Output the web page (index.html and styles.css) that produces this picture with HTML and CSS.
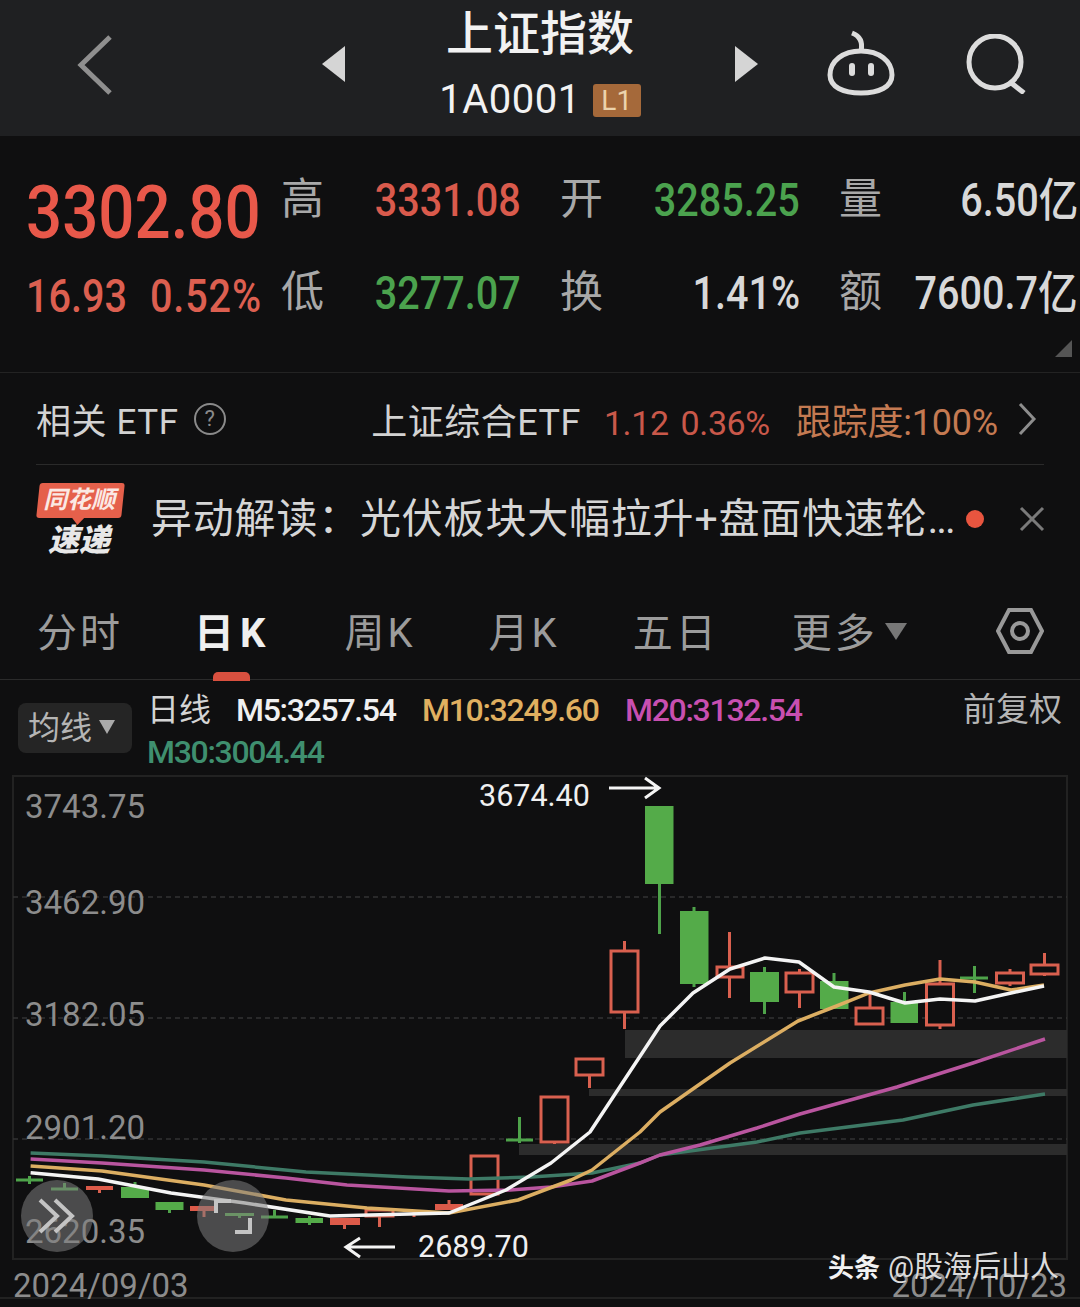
FILE: index.html
```html
<!DOCTYPE html>
<html lang="zh-CN">
  <head>
    <meta charset="UTF-8" />
    <meta name="viewport" content="width=device-width, initial-scale=1.0" />
    <title>上证指数</title>
    <link rel="stylesheet" href="styles.css">
  </head>
  <body>
    <header class="top-bar">
      <svg class="back-icon" viewBox="0 0 38 62"><path d="M34 3 L5 31 L34 59" /></svg>
      <span class="arrow-left"></span>
      <div class="title-box">
        <h1>上证指数</h1>
        <div class="code-line"><span class="code">1A0001</span><span class="level">L1</span></div>
      </div>
      <span class="arrow-right"></span>
      <svg class="robot-icon" viewBox="0 0 68 66">
        <path d="M34 21 C36 12 33 6 25 3" />
        <path d="M34 21 C52 21 65 31 65 45 C65 57 52 63 34 63 C16 63 3 57 3 45 C3 31 16 21 34 21 Z" />
        <rect class="eye" x="22" y="33" width="6" height="13" rx="3" />
        <rect class="eye" x="41" y="33" width="6" height="13" rx="3" />
      </svg>
      <svg class="search-icon" viewBox="0 0 60 60">
        <circle cx="29" cy="28" r="26" />
        <path d="M44 48 L58 59" />
      </svg>
    </header>

    <section class="quote">
      <div class="price-box">
        <div class="price num">3302.80</div>
        <div class="change">
          <span class="num">16.93</span>
          <span class="num">0.52%</span>
        </div>
      </div>
      <div class="stats">
        <div class="stat"><span class="stat-label">高</span><span class="num red">3331.08</span></div>
        <div class="stat"><span class="stat-label">开</span><span class="num green">3285.25</span></div>
        <div class="stat"><span class="stat-label">量</span><span class="num light">6.50亿</span></div>
        <div class="stat"><span class="stat-label">低</span><span class="num green">3277.07</span></div>
        <div class="stat"><span class="stat-label">换</span><span class="num light">1.41%</span></div>
        <div class="stat"><span class="stat-label">额</span><span class="num light">7600.7亿</span></div>
      </div>
      <span class="corner"></span>
    </section>

    <section class="etf-row">
      <div class="etf-left">
        <span class="etf-title">相关 ETF</span>
        <span class="help">?</span>
      </div>
      <div class="etf-right">
        <span class="etf-name">上证综合ETF</span>
        <span class="etf-num">1.12</span>
        <span class="etf-num">0.36%</span>
        <span class="etf-track">跟踪度:100%</span>
        <svg class="etf-more" viewBox="0 0 20 34"><path d="M3 2 L17 17 L3 32" /></svg>
      </div>
    </section>

    <section class="news-row">
      <div class="logo">
        <div class="logo-tag"><span>同花顺</span></div>
        <div class="logo-sub">速递</div>
      </div>
      <div class="news-text">异动解读：光伏板块大幅拉升+盘面快速轮<span class="dots">...</span></div>
      <span class="news-dot"></span>
      <svg class="news-close" viewBox="0 0 26 26"><path d="M2 2 L24 24 M24 2 L2 24" /></svg>
    </section>

    <nav class="tabs">
      <span class="tab">分时</span>
      <span class="tab active">日K</span>
      <span class="tab">周K</span>
      <span class="tab">月K</span>
      <span class="tab">五日</span>
      <span class="tab">更多<i class="tab-caret"></i></span>
      <svg class="hex-icon" viewBox="0 0 48 46">
        <path d="M13 2 L35 2 L46 23 L35 44 L13 44 L2 23 Z" />
        <circle cx="24" cy="23" r="8" />
      </svg>
    </nav>

    <section class="ma-row">
      <div class="ma-btn">均线<i class="ma-caret"></i></div>
      <div class="ma-values">
        <span class="ma-name">日线</span>
        <span class="ma-white">M5:3257.54</span>
        <span class="ma-orange">M10:3249.60</span>
        <span class="ma-pink">M20:3132.54</span>
        <span class="ma-green">M30:3004.44</span>
      </div>
      <div class="ma-adjust">前复权</div>
    </section>

    <section class="chart">
      <svg class="chart-svg" viewBox="0 775 1080 532">
        <path class="frame" d="M13 776 H1067 V1259 H13 Z M0 1298 H1080" />
        <path class="dash" d="M13 897 H1067 M13 1018 H1067 M13 1139 H1067" />
        <rect class="band" x="625" y="1030" width="442" height="28" />
        <rect class="band" x="589" y="1089" width="478" height="7" />
        <rect class="band" x="519" y="1144" width="548" height="11" />

        <g class="candle-up">
          <path d="M624.5 941 V1029 M729.5 932 V998 M799.5 969 V1008 M870 992 V1024 M940 960 V1029 M1010 969 V986 M1044.5 953 V976 M589.5 1058 V1088 M554.5 1096 V1144 M484.5 1155 V1195 M449 1200 V1210 M414 1212 V1217 M379.5 1209 V1227 M344.5 1218 V1229 M204 1206 V1217 M99.5 1186 V1193" />
          <rect x="611" y="951" width="27" height="61" />
          <rect x="717" y="967" width="26" height="10" />
          <rect x="786" y="973" width="27" height="19" />
          <rect x="856" y="1008" width="27" height="16" />
          <rect x="926.5" y="984" width="27" height="41" />
          <rect x="996.5" y="973" width="27" height="10" />
          <rect x="1031" y="965" width="27" height="9" />
          <rect x="576" y="1059" width="27" height="16" />
          <rect x="541" y="1097" width="27" height="45" />
          <rect x="471" y="1156" width="27" height="38" />
          <rect x="366" y="1210" width="27" height="6" />
        </g>
        <g class="candle-up-solid">
          <rect x="435" y="1204" width="28" height="6" />
          <rect x="330" y="1218" width="30" height="7" />
          <rect x="190" y="1206" width="26" height="5" />
          <rect x="86" y="1186" width="27" height="4" />
        </g>
        <g class="candle-down">
          <path d="M659.5 884 V934 M694 907 V987 M764.5 967 V1014 M834 973 V1009 M904.5 992 V1023 M974.5 966 V993 M960 978 H988 M519.5 1117 V1143 M506 1140 H533 M309.5 1216 V1225 M274.5 1210 V1218 M261 1217 H288 M239.5 1213 V1218 M169.5 1202 V1213 M135 1182 V1198 M64.5 1183 V1190 M51 1189 H78 M29.5 1176 V1184 M16 1180 H43" />
          <rect x="645" y="806" width="28.5" height="78" />
          <rect x="680" y="911" width="28.5" height="73" />
          <rect x="750" y="972" width="29" height="30" />
          <rect x="820" y="981" width="28.5" height="28" />
          <rect x="890.5" y="1002" width="27.5" height="21" />
          <rect x="295.5" y="1218" width="27.5" height="5" />
          <rect x="225" y="1213" width="29" height="3" />
          <rect x="155.5" y="1202" width="28" height="8" />
          <rect x="121" y="1187" width="28" height="11" />
        </g>

        <polyline class="line m30" points="30.6,1153 102,1156 204,1162 306,1172 408,1177 469,1179 531,1177 592,1173 640,1163 660,1155 757,1142 800,1133 903,1120 973,1105 1045,1094" />
        <polyline class="line m20" points="30.6,1159 102,1163 204,1170 286,1178 347,1185 449,1191 510,1190 551,1187 592,1181 640,1163 660,1155 700,1145 757,1128 800,1114 897,1087 973,1063 1045,1039" />
        <polyline class="line m10" points="30.6,1166 102,1171 204,1185 286,1200 367,1208 449,1213 518,1200 571,1180 592,1170 640,1132 660,1112 730,1063 798,1021 834,1007 869,993 905,985 940,979 975,982 1011,990 1044,985" />
        <polyline class="line m5" points="30.6,1172.7 98,1179 171,1193 245,1203 330,1216 449,1213 506,1190 551,1163 590,1132 660,1026 693,993 730,969 765,958 799,962 834,987 869,992 905,1003 940,999 975,1001 1011,993 1044,986" />

        <text class="axis" x="25" y="818">3743.75</text>
        <text class="axis" x="25" y="914">3462.90</text>
        <text class="axis" x="25" y="1026">3182.05</text>
        <text class="axis" x="25" y="1139">2901.20</text>
        <text class="axis" x="25" y="1243">2620.35</text>
        <text class="axis" x="13" y="1297">2024/09/03</text>
        <text class="axis end" x="1067" y="1297">2024/10/23</text>

        <text class="note" x="479" y="806">3674.40</text>
        <path class="note-arrow" d="M609 788 H659 M645 778 L659 788 L645 798" />
        <text class="note" x="418" y="1257">2689.70</text>
        <path class="note-arrow" d="M395 1247 H346 M360 1238 L346 1247 L360 1257" />

        <circle class="round-btn" cx="57" cy="1216" r="36" />
        <path class="round-icon" d="M40 1200 L57 1216 L40 1232 M55 1200 L72 1216 L55 1232" />
        <circle class="round-btn" cx="233" cy="1216" r="36" />
        <path class="round-icon" d="M216 1213 V1201 H231 M235 1232 H250 V1218" />

        <text class="mark-bold" x="828" y="1277">头条</text>
        <text class="mark" x="888" y="1277">@股海后山人</text>
      </svg>
    </section>
  </body>
</html>
```

FILE: styles.css
```css
* {
  margin: 0;
  padding: 0;
  box-sizing: border-box;
}

body {
  width: 1080px;
  height: 1307px;
  overflow: hidden;
  background: #0f0f10;
  color: #ddd;
  font-family: Roboto, "Noto Sans CJK SC", sans-serif;
}

/* numbers in the app use a narrow face, squeeze Roboto to get there */
.num {
  display: inline-block;
  transform: scaleX(0.86);
}

/* top bar */
.top-bar {
  height: 136px;
  background: #1f2022;
  display: flex;
  align-items: center;
  padding-left: 76px;
}

.back-icon {
  width: 38px;
  height: 62px;
  margin-right: 208px;
  margin-top: -6px;
}

.back-icon path {
  fill: none;
  stroke: #8f8f8f;
  stroke-width: 5;
}

.arrow-left,
.arrow-right {
  width: 0;
  height: 0;
  margin-top: -8px;
  border-top: 18px solid transparent;
  border-bottom: 18px solid transparent;
}

.arrow-left {
  border-right: 23px solid #d5d5d5;
}

.arrow-right {
  border-left: 23px solid #d5d5d5;
  margin-right: 69px;
}

.title-box {
  width: 390px;
  margin-top: -9px;
  display: flex;
  flex-direction: column;
  align-items: center;
  gap: 15px;
}

.title-box h1 {
  font-size: 47px;
  line-height: 58px;
  font-weight: 500;
  color: #f2f2f2;
}

.code-line {
  display: flex;
  align-items: center;
  gap: 12px;
}

.code {
  font-size: 40px;
  line-height: 44px;
  color: #f2f2f2;
  letter-spacing: 0.5px;
}

.level {
  width: 48px;
  height: 33px;
  background: #a5693a;
  border-radius: 3px;
  color: #ecd3ac;
  font-size: 28px;
  line-height: 33px;
  text-align: center;
}

.robot-icon {
  width: 68px;
  height: 66px;
  margin-right: 71px;
  margin-top: -10px;
}

.robot-icon path {
  fill: none;
  stroke: #dcdcdc;
  stroke-width: 5;
}

.eye {
  fill: #dcdcdc;
}

.search-icon {
  width: 60px;
  height: 60px;
  margin-top: -8px;
}

.search-icon circle,
.search-icon path {
  fill: none;
  stroke: #dcdcdc;
  stroke-width: 5;
}

/* quote block */
.quote {
  position: relative;
  height: 237px;
  border-bottom: 1px solid #232323;
  display: flex;
  padding: 30px 0 0 26px;
}

.price-box {
  width: 255px;
}

.price {
  font-size: 74px;
  line-height: 94px;
  font-weight: 500;
  color: #e8584a;
  transform-origin: left;
}

.change {
  margin-top: 7px;
  display: flex;
  gap: 27px;
  width: 234px;
  font-size: 46px;
  line-height: 58px;
  font-weight: 500;
  color: #dc5f50;
}

.change .num {
  width: 97px;
  white-space: nowrap;
  transform-origin: left;
}

.change .num + .num {
  letter-spacing: 1px;
}

.stats {
  display: grid;
  grid-template-columns: 240px 240px 239px;
  column-gap: 39px;
  row-gap: 35px;
  align-content: start;
}

.stat {
  display: flex;
  justify-content: space-between;
  align-items: center;
  height: 58px;
}

.stat-label {
  font-size: 43px;
  color: #a8a8a8;
}

.stat .num {
  font-size: 46px;
  line-height: 54px;
  font-weight: 500;
  margin-top: 10px;
  white-space: nowrap;
  transform-origin: right;
}

.red {
  color: #d95a4c;
}

.green {
  color: #4ba24e;
}

.light {
  color: #d8d8d8;
}

.corner {
  position: absolute;
  right: 8px;
  bottom: 15px;
  border-left: 17px solid transparent;
  border-bottom: 17px solid #555;
}

/* etf row */
.etf-row {
  height: 92px;
  margin: 0 36px;
  border-bottom: 1px solid #2a2a2a;
  display: flex;
  align-items: center;
  justify-content: space-between;
  font-size: 36px;
}

.etf-left {
  display: flex;
  align-items: center;
  gap: 15px;
  color: #d2d2d2;
}

.etf-title {
  font-size: 35px;
  letter-spacing: 0.6px;
}

.help {
  width: 32px;
  height: 32px;
  border: 2px solid #8a8a8a;
  border-radius: 50%;
  color: #8a8a8a;
  font-size: 22px;
  line-height: 28px;
  text-align: center;
}

.etf-right {
  display: flex;
  align-items: baseline;
  white-space: nowrap;
}

.etf-name {
  color: #d2d2d2;
  letter-spacing: 0.5px;
  margin-right: 23px;
}

.etf-num {
  color: #c9584a;
  font-size: 34px;
  margin-right: 12px;
  letter-spacing: -0.4px;
}

.etf-track {
  color: #c47a52;
  margin-left: 14px;
  margin-right: 19px;
  letter-spacing: -0.2px;
}

.etf-more {
  width: 20px;
  height: 34px;
  margin-right: 7px;
  align-self: center;
}

.etf-more path {
  fill: none;
  stroke: #8d8d8d;
  stroke-width: 3;
}

/* news row */
.news-row {
  height: 107px;
  display: flex;
  align-items: center;
  padding-left: 38px;
}

.logo {
  width: 113px;
  height: 76px;
  margin-top: 4px;
}

.logo-tag {
  position: relative;
  width: 85px;
  height: 35px;
  background: #e5604b;
  border-radius: 3px;
  transform: skewX(-6deg);
  text-align: center;
  font-size: 24px;
  line-height: 35px;
  font-weight: 700;
  color: #fbe9e4;
}

.logo-tag span {
  display: inline-block;
  transform: skewX(-8deg);
}

.logo-tag::after {
  content: "";
  position: absolute;
  left: 36px;
  top: 35px;
  border-left: 6px solid transparent;
  border-right: 6px solid transparent;
  border-top: 7px solid #e5604b;
}

.logo-sub {
  width: 82px;
  margin-top: 4px;
  text-align: center;
  font-size: 31px;
  line-height: 38px;
  font-weight: 900;
  font-style: italic;
  color: #e8e8e8;
}

.news-text {
  width: 814px;
  margin-top: -8px;
  font-size: 41px;
  letter-spacing: 0.8px;
  color: #d6d6d6;
  white-space: nowrap;
}

.dots {
  letter-spacing: -2px;
}

.news-dot {
  width: 18px;
  height: 18px;
  border-radius: 50%;
  background: #e8553f;
  margin-left: 1px;
}

.news-close {
  width: 26px;
  height: 26px;
  margin-left: 35px;
}

.news-close path {
  fill: none;
  stroke: #7a7a7a;
  stroke-width: 3;
}

/* tabs */
.tabs {
  position: relative;
  height: 108px;
  border-bottom: 1px solid #2b2b2b;
  display: flex;
  align-items: center;
  gap: 73px;
  padding: 8px 0 0 37px;
}

.tab {
  position: relative;
  font-size: 40px;
  color: #9c9c9c;
  letter-spacing: 3px;
  white-space: nowrap;
}

.tab.active {
  margin-left: -2px;
  color: #efefef;
  font-weight: 700;
  letter-spacing: 6px;
}

.tab.active::after {
  content: "";
  position: absolute;
  left: 19px;
  right: 21px;
  bottom: -22px;
  height: 9px;
  background: #d9503f;
  border-radius: 5px 5px 0 0;
}

.tab-caret,
.ma-caret {
  display: inline-block;
  border-left: 11px solid transparent;
  border-right: 11px solid transparent;
  border-top: 17px solid #777;
  margin-left: 7px;
  vertical-align: 7px;
}

.hex-icon {
  position: absolute;
  left: 996px;
  top: 36px;
  width: 48px;
  height: 46px;
}

.hex-icon path,
.hex-icon circle {
  fill: none;
  stroke: #999;
  stroke-width: 4;
}

/* moving average row */
.ma-row {
  position: relative;
  height: 95px;
  display: flex;
  padding: 11px 18px 0;
}

.ma-btn {
  width: 114px;
  height: 50px;
  margin-top: 12px;
  background: #252525;
  border-radius: 8px;
  padding-left: 10px;
  font-size: 32px;
  line-height: 50px;
  color: #b5b5b5;
  white-space: nowrap;
}

.ma-caret {
  border-left-width: 8px;
  border-right-width: 8px;
  border-top-width: 14px;
  border-top-color: #aaa;
  vertical-align: 5px;
}

.ma-values {
  width: 720px;
  margin-left: 15px;
  display: flex;
  flex-wrap: wrap;
  column-gap: 25px;
  font-size: 32px;
  line-height: 38px;
  align-content: start;
}

.ma-values span {
  display: inline-block;
  white-space: nowrap;
}

.ma-name {
  color: #d4d4d4;
}

.ma-white {
  color: #f0f0f0;
  width: 161px;
  font-weight: 500;
  letter-spacing: -1.3px;
}

.ma-orange {
  color: #e0b060;
  width: 178px;
  font-weight: 500;
  letter-spacing: -1.3px;
}

.ma-pink {
  color: #c84fb0;
  width: 178px;
  font-weight: 500;
  letter-spacing: -1.3px;
}

.ma-green {
  color: #3f8f6f;
  width: 178px;
  font-weight: 500;
  letter-spacing: -1.3px;
  margin-top: 4px;
}

.ma-adjust {
  margin-left: auto;
  font-size: 33px;
  line-height: 38px;
  color: #b5b5b5;
}

/* chart */
.chart {
  height: 532px;
}

.chart-svg {
  display: block;
  width: 1080px;
  height: 532px;
}

.frame {
  fill: none;
  stroke: #222;
  stroke-width: 2;
}

.dash {
  fill: none;
  stroke: #333;
  stroke-width: 1.5;
  stroke-dasharray: 5 4;
}

.band {
  fill: #2c2c2c;
}

.candle-up path,
.candle-up rect {
  fill: #0f0f10;
  stroke: #d9604f;
  stroke-width: 3;
}

.candle-up-solid rect {
  fill: #dc5a49;
}

.candle-down path {
  fill: none;
  stroke: #4ea34a;
  stroke-width: 3;
}

.candle-down rect {
  fill: #54ab49;
}

.line {
  fill: none;
  stroke-linejoin: round;
}

.m5 {
  stroke: #f4f4f4;
  stroke-width: 3.5;
}

.m10 {
  stroke: #dcae62;
  stroke-width: 3.5;
}

.m20 {
  stroke: #b9559f;
  stroke-width: 3.5;
}

.m30 {
  stroke: #3e7a66;
  stroke-width: 3.5;
}

.axis {
  font-family: Roboto, sans-serif;
  font-size: 33px;
  fill: #8c8c8c;
}

.end {
  text-anchor: end;
}

.note {
  font-family: Roboto, sans-serif;
  font-size: 30.5px;
  fill: #f0f0f0;
}

.note-arrow {
  fill: none;
  stroke: #f4f4f4;
  stroke-width: 3;
}

.round-btn {
  fill: rgba(125, 125, 125, 0.55);
}

.round-icon {
  fill: none;
  stroke: #c4c4c4;
  stroke-width: 4;
}

.mark-bold {
  font-family: "Noto Sans CJK SC", sans-serif;
  font-size: 26px;
  font-weight: 700;
  fill: #f2f2f2;
}

.mark {
  font-family: Roboto, "Noto Sans CJK SC", sans-serif;
  font-size: 29px;
  fill: #dcdcdc;
}
```
